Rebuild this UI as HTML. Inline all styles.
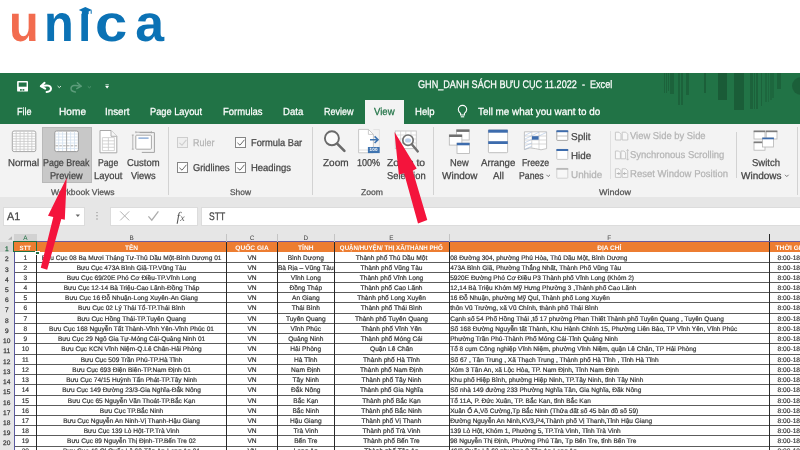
<!DOCTYPE html>
<html lang="vi">
<head>
<meta charset="utf-8">
<title>Unica - Excel Page Break Preview</title>
<style>
html,body{margin:0;padding:0;width:800px;height:450px;overflow:hidden;}
#clip{position:absolute;left:0;top:0;width:800px;height:450px;overflow:hidden;background:#fff;}
body{width:800px;height:450px;overflow:hidden;background:#fff;position:relative;font-family:"Liberation Sans",sans-serif;text-rendering:geometricPrecision;}
#wrap{position:absolute;left:-12px;top:-12px;width:824px;height:474px;filter:blur(0.4px);}
#page{position:absolute;left:12px;top:12px;width:800px;height:450px;}
.abs{position:absolute;}
.t{position:absolute;white-space:nowrap;line-height:1;transform-origin:0 0;font-family:"Liberation Sans",sans-serif;-webkit-text-stroke:0.25px currentColor;}
#logo{position:absolute;left:0;top:0;font-family:"Liberation Sans",sans-serif;font-weight:bold;font-size:51.8px;line-height:1;color:#0b72b5;white-space:nowrap;}
#logo span{position:absolute;top:-2.4px;transform-origin:0 0;}
#logo .u{color:#f26c4f;}
#green{left:-12px;top:73px;width:824px;height:50.6px;background:#217346;}
#viewtab{left:364.5px;top:100px;width:39.5px;height:25px;background:#f3f3f3;}
#ribbon{left:-12px;top:123.6px;width:824px;height:73.4px;background:#f3f3f3;}
#below{left:-12px;top:197px;width:824px;height:265px;background:#e6e6e6;}
.sep{position:absolute;width:1px;background:#d2d2d2;top:127px;height:68px;}
.box{position:absolute;background:#fff;border:1px solid #dcdcdc;box-sizing:border-box;}
.cb{position:absolute;width:10.5px;height:10.5px;box-sizing:border-box;border:1px solid #858585;background:#fdfdfd;}
.cb.dis{border-color:#cdcdcd;background:#efefef;}
svg{position:absolute;overflow:visible;}
/* sheet */
#sheet{left:-12px;top:228px;width:824px;height:234px;background:#e6e6e6;}
.hrow,.row{position:absolute;left:0;width:800px;}
.hrow{background:#ed7d31;left:14px;width:798px;}
.row{background:#fff;left:14px;width:798px;border-bottom:1px solid #5c5c5c;box-sizing:border-box;}
.hc{position:absolute;top:0;height:100%;color:#fff;font-weight:bold;font-size:6.6px;line-height:13.6px;text-align:center;white-space:nowrap;box-sizing:border-box;margin-left:-14px;overflow:hidden;}
.c{position:absolute;top:0;height:100%;color:#383838;font-size:6.62px;line-height:11px;text-align:center;white-space:nowrap;box-sizing:border-box;margin-left:-14px;overflow:hidden;-webkit-text-stroke:0.2px currentColor;}
.rn{position:absolute;left:0;width:13.5px;text-align:center;color:#3a3a3a;font-size:6.6px;line-height:16px;box-sizing:border-box;-webkit-text-stroke:0.25px currentColor;}
.cl{position:absolute;top:233.5px;height:8px;text-align:center;color:#444;font-size:6.4px;line-height:10.8px;}
.cl.sel{background:#d2d2d2;color:#217346;border-bottom:1px solid #217346;box-sizing:border-box;}
.vl{position:absolute;width:1px;background:#2a2a2a;top:241.7px;height:225px;}
</style>
</head>
<body>
<div id="clip"><div id="wrap"><div id="page">
<!-- logo -->
<div id="logo"><span class="u" style="left:9.3px;transform:scaleX(0.94)">u</span><span style="left:44.2px;transform:scaleX(0.94)">n</span><span style="left:77.6px;transform:scaleX(0.93)">i</span><span style="left:95px;transform:scaleX(1.12)">c</span><span style="left:135.2px;transform:scaleX(1.0)">a</span></div>
<div class="abs" style="left:78px;top:0;width:15px;height:13.2px;background:#fff"></div>
<svg style="left:78px;top:5.6px" width="15" height="9" viewBox="0 0 15 9"><polygon points="0.8,4.1 7.3,1 14,4.1 7.3,7.1" fill="#0b72b5"/><path d="M3.9,5.2 L3.9,8.2 L10.7,8.2 L10.7,5.2 Z" fill="#0b72b5"/><path d="M13.2,4.3 L13.2,7.8" stroke="#0b72b5" stroke-width="1" fill="none"/></svg>

<!-- excel chrome -->
<div id="green" class="abs"></div>
<!-- title bar pattern -->
<div class="abs" style="left:663.5px;top:73px;width:1.2px;height:20.4px;background:rgba(0,0,0,0.145)"></div>
<div class="abs" style="left:665.8px;top:73px;width:1.2px;height:20.4px;background:rgba(0,0,0,0.145)"></div>
<div class="abs" style="left:667.6px;top:73px;width:1.2px;height:18.0px;background:rgba(0,0,0,0.145)"></div>
<div class="abs" style="left:670px;top:73px;width:4.4px;height:21.4px;background:rgba(0,0,0,0.145)"></div>
<div class="abs" style="left:678px;top:73px;width:2px;height:31.7px;background:rgba(0,0,0,0.145)"></div>
<div class="abs" style="left:681px;top:73px;width:2.4px;height:31.7px;background:rgba(0,0,0,0.145)"></div>
<div class="abs" style="left:685.6px;top:73px;width:3.4px;height:22.3px;background:rgba(0,0,0,0.145)"></div>
<div class="abs" style="left:704.4px;top:73px;width:1.6px;height:19.5px;background:rgba(0,0,0,0.174)"></div>
<div class="abs" style="left:717.5px;top:73px;width:9.4px;height:27.0px;background:rgba(0,0,0,0.203)"></div>
<div class="abs" style="left:734.4px;top:73px;width:9.4px;height:37.3px;background:rgba(0,0,0,0.189)"></div>
<div class="abs" style="left:750.3px;top:73px;width:2.4px;height:36.4px;background:rgba(0,0,0,0.145)"></div>
<div class="abs" style="left:753.6px;top:73px;width:1.6px;height:36.4px;background:rgba(0,0,0,0.145)"></div>
<div class="abs" style="left:756px;top:73px;width:1.8px;height:36.4px;background:rgba(0,0,0,0.145)"></div>
<div class="abs" style="left:760.6px;top:73px;width:1.9px;height:32.6px;background:rgba(0,0,0,0.145)"></div>
<div class="abs" style="left:765.3px;top:73px;width:1.5px;height:29.0px;background:rgba(0,0,0,0.102)"></div>
<div class="abs" style="left:767.6px;top:73px;width:1.5px;height:29.0px;background:rgba(0,0,0,0.102)"></div>
<div class="abs" style="left:770px;top:73px;width:1.5px;height:27.0px;background:rgba(0,0,0,0.102)"></div>
<div class="abs" style="left:772.3px;top:73px;width:1.5px;height:25.0px;background:rgba(0,0,0,0.102)"></div>
<div class="abs" style="left:776.6px;top:73px;width:4.7px;height:15.8px;background:rgba(0,0,0,0.145)"></div>
<div class="abs" style="left:792px;top:77px;width:18px;height:18px;border-radius:9px;background:rgba(0,0,0,0.174)"></div>
<div id="viewtab" class="abs"></div>
<div id="ribbon" class="abs"></div>
<div id="below" class="abs"></div>


<!-- separators -->
<div class="sep" style="left:168px"></div>
<div class="sep" style="left:312px"></div>
<div class="sep" style="left:433px"></div>
<div class="sep" style="left:736px;top:131.5px;height:46.5px"></div>
<div class="sep" style="left:797px"></div>
<div class="sep" style="left:610px;top:131px;height:48px;background:#e0e0e0"></div>

<!-- formula bar -->
<div class="box" style="left:3px;top:207px;width:82px;height:18.5px"></div>
<div class="box" style="left:110px;top:207px;width:87.5px;height:18.5px"></div>
<div class="box" style="left:200.5px;top:207px;width:610px;height:18.5px"></div>

<!-- selected button -->
<div class="abs" style="left:42px;top:126.8px;width:50.3px;height:56px;background:#c8c8c8;border:1px solid #b9b9b9;box-sizing:border-box"></div>
<div class="cb dis" style="left:177.3px;top:137.3px"></div>
<div class="cb" style="left:235.3px;top:137.3px"></div>
<div class="cb" style="left:177.3px;top:162.3px"></div>
<div class="cb" style="left:235.3px;top:162.3px"></div>
<svg style="left:0;top:0" width="800" height="450" viewBox="0 0 800 450" fill="none">
<!-- quick access -->
<g transform="translate(0,0.6)">
<g>
 <rect x="17.1" y="80.4" width="10.9" height="10.6" rx="0.9" fill="#fff"/>
 <rect x="18.7" y="81.9" width="7.9" height="4.2" fill="#217346"/>
 <rect x="20" y="88.5" width="1.8" height="1.6" fill="#217346"/>
 <rect x="22.5" y="88.5" width="1.8" height="1.6" fill="#217346"/>
</g>
<g stroke="#fff" stroke-width="2" fill="none" stroke-linecap="round" stroke-linejoin="round">
 <path d="M44.6,82.2 L40.8,85.6 L45.2,88"/>
 <path d="M41.2,85.6 Q50.6,83.2 51,88 Q51,91 46.6,91.4"/>
</g>
<path d="M57.6,85.4 L59.3,87 L61,85.4" stroke="#d6e8dd" stroke-width="1"/>
<g stroke="#5c9c7a" stroke-width="1.5" fill="none" stroke-linecap="round" stroke-linejoin="round">
 <path d="M77.4,82.2 L81.2,85.6 L76.8,88"/>
 <path d="M80.8,85.6 Q71.4,83.2 71,88 Q71,91 75.4,91.4"/>
</g>
<path d="M87.8,85.8 L89.4,87.2 L91,85.8" stroke="#5c9c7a" stroke-width="0.8"/>
<path d="M105.4,84.2 H108.8" stroke="#fff" stroke-width="0.8"/>
<path d="M105.2,85.4 H109 L107.1,87.8 Z" fill="#fff"/>
</g>
<!-- bulb -->
<g stroke="#fff" stroke-width="1.1" fill="none">
 <path d="M460.6,115 V113.4 Q458.3,111.6 458.3,109.6 A4.2,4.2 0 0 1 466.7,109.6 Q466.7,111.6 464.4,113.4 V115 Z"/>
 <path d="M460.8,116.8 H464.2"/>
</g>

<!-- Normal icon -->
<g>
 <rect x="12.3" y="131" width="23.5" height="20.6" rx="1.8" fill="#fff" stroke="#a6a6a6" stroke-width="1"/>
 <path d="M16.2,131.5 V151 M20.1,131.5 V151 M24,131.5 V151 M27.9,131.5 V151 M31.8,131.5 V151 M12.8,133.6 H35.3 M12.8,136.2 H35.3 M12.8,138.8 H35.3 M12.8,141.4 H35.3 M12.8,144 H35.3 M12.8,146.6 H35.3 M12.8,149.2 H35.3" stroke="#c6c6c6" stroke-width="0.8"/>
</g>
<!-- Page Break Preview icon -->
<g>
 <rect x="54.8" y="131" width="23.6" height="20.6" rx="1.8" fill="#fff" stroke="#999" stroke-width="1"/>
 <path d="M58.7,131.5 V151 M62.6,131.5 V151 M70.6,131.5 V151 M74.5,131.5 V151 M55.3,134 H77.9 M55.3,137 H77.9 M55.3,140 H77.9 M55.3,143 H77.9 M55.3,148.6 H77.9" stroke="#d3dfee" stroke-width="0.8"/>
 <path d="M66.6,131.5 V151.2" stroke="#a2a2a2" stroke-width="0.9"/>
 <path d="M55.5,145.8 H77.8" stroke="#a2a2a2" stroke-width="0.9" stroke-dasharray="2.6 1.2"/>
</g>
<!-- Page Layout icon -->
<g>
 <path d="M100,130.5 H111 L116.8,136.3 V152.8 H100 Z" fill="#fff" stroke="#a8a8a8" stroke-width="1"/>
 <path d="M111,130.5 V136.3 H116.8" stroke="#a8a8a8" stroke-width="0.9" fill="#f6f6f6"/>
 <path d="M102.4,137.6 H114.4 V150.6 H102.4 Z M102.4,140.8 H114.4 M102.4,144 H114.4 M102.4,147.3 H114.4 M108.4,137.6 V150.6" stroke="#c9c9c9" stroke-width="0.8"/>
</g>
<!-- Custom Views icon -->
<g>
 <path d="M139.6,132.6 H154.4 V152.4 H141.8" stroke="#a3a3a3" stroke-width="1"/>
 <rect x="135.8" y="135.2" width="15.6" height="14" rx="0.8" fill="#fff" stroke="#a8a8a8" stroke-width="1"/>
 <rect x="138.4" y="137.3" width="10.2" height="1.7" fill="#9db8dc"/>
 <path d="M132.8,135 V149.2 M131.8,135 H133.8 M131.8,149.2 H133.8 M135.8,132.2 H151.4 M135.8,131.2 V133.2 M151.4,131.2 V133.2" stroke="#a3a3a3" stroke-width="0.8"/>
</g>
<!-- Zoom icon -->
<g>
 <circle cx="331.9" cy="138.3" r="7" fill="#fbfbfb" stroke="#6a6a6a" stroke-width="1.9"/>
 <path d="M337.4,143.8 L344.4,150.8" stroke="#6a6a6a" stroke-width="2.6" stroke-linecap="round"/>
</g>
<!-- 100% icon -->
<g>
 <path d="M358.6,129.4 H368.4 L373.4,134.4 V152.8 H358.6 Z" fill="#fff" stroke="#c2c2c2" stroke-width="0.9"/>
 <path d="M368.4,129.4 V134.4 H373.4" stroke="#c2c2c2" stroke-width="0.8"/>
 <path d="M373.4,129.6 H379.4 V147" stroke="#dcdcdc" stroke-width="0.8"/>
 <path d="M358.8,150 H368" stroke="#d6d6d6" stroke-width="0.8"/>
 <path d="M370,139.7 H377.6 M374.6,136.4 L378,139.7 L374.6,143" stroke="#3f74b0" stroke-width="1.6"/>
 <rect x="367.9" y="147" width="11.8" height="6.1" fill="#3f74b0"/>
</g>
<!-- Zoom to Selection icon -->
<g>
 <rect x="395.3" y="131" width="21" height="17.6" fill="#fff" stroke="#c4c4c4" stroke-width="0.9"/>
 <path d="M395.3,135 H416.3 M395.3,139 H416.3 M395.3,143 H416.3 M400.6,131 V148.6 M405.8,131 V135 M411,131 V135" stroke="#cfcfcf" stroke-width="0.7"/>
 <circle cx="408" cy="140.2" r="5.2" fill="#fdfdfd" stroke="#707070" stroke-width="1.7"/>
 <ellipse cx="408" cy="140.4" rx="3" ry="2.2" fill="#bcd0ea"/>
 <path d="M412,144.4 L417.8,151.4" stroke="#707070" stroke-width="2.4" stroke-linecap="round"/>
</g>
<!-- New Window icon -->
<g>
 <rect x="456.6" y="129.8" width="12.6" height="10.2" fill="#fff" stroke="#b4b4b4" stroke-width="0.8"/>
 <rect x="456.4" y="129.5" width="13" height="2.4" fill="#6f6f6f"/>
 <rect x="449.3" y="134.9" width="12.6" height="10.2" fill="#fff" stroke="#b4b4b4" stroke-width="0.8"/>
 <rect x="449.1" y="134.6" width="13" height="2.4" fill="#6f6f6f"/>
 <rect x="457" y="143.2" width="12.4" height="10.3" fill="#fff" stroke="#b4b4b4" stroke-width="0.8"/>
 <rect x="456.8" y="142.8" width="12.8" height="2.5" fill="#3d6cad"/>
</g>
<!-- Arrange All icon -->
<g>
 <rect x="488.4" y="129.9" width="19.2" height="22.8" rx="0.8" fill="#fff" stroke="#b9b9b9" stroke-width="0.9"/>
 <rect x="488.2" y="129.7" width="19.6" height="3" fill="#3d6cad"/>
 <rect x="488.2" y="141.2" width="19.6" height="2.8" fill="#3d6cad"/>
</g>
<!-- Freeze Panes icon -->
<g>
 <path d="M524.4,131.8 H546.6 V148.6 Q541,151 535.4,148.6 Q530,146.6 524.4,149.6 Z" fill="#fff" stroke="#b5b5b5" stroke-width="0.8"/>
 <path d="M524.4,136 H546.6 M524.4,140 H546.6 M524.4,144 H546.6 M531.8,131.8 V148 M539,131.8 V149.4" stroke="#c9c9c9" stroke-width="0.7"/>
 <path d="M524.6,135.6 L531.6,132 M524.6,139.2 L539,132.2 M524.6,142.8 L546.4,132.4 M524.6,146.4 L531.8,143 M524.6,149.4 L531.8,146.2" stroke="#a9c0df" stroke-width="0.6"/>
 <rect x="532" y="136.2" width="6.6" height="3.5" fill="#3d6cad"/>
</g>
<!-- Split -->
<g>
 <rect x="556.8" y="130.8" width="11" height="9.6" rx="0.6" fill="#fff" stroke="#9d9d9d" stroke-width="0.9"/>
 <rect x="556.4" y="130.3" width="11.8" height="1.9" fill="#3d6cad"/>
 <path d="M557,136 H567.6" stroke="#b5b5b5" stroke-width="0.8"/>
</g>
<!-- Hide -->
<g>
 <rect x="556.8" y="149.4" width="11" height="10" rx="0.6" fill="#fff" stroke="#c4c4c4" stroke-width="0.9"/>
 <rect x="556.4" y="149" width="11.8" height="2" fill="#3d6cad"/>
</g>
<!-- Unhide -->
<g>
 <rect x="556.8" y="168.4" width="11" height="9.8" rx="0.6" fill="#f7f7f7" stroke="#cdcdcd" stroke-width="0.9"/>
 <rect x="556.4" y="168" width="11.8" height="1.8" fill="#b9b9b9"/>
</g>
<!-- View side by side etc (disabled) -->
<g stroke="#c3c3c3" stroke-width="0.9" fill="#f8f8f8">
 <path d="M615.4,132.2 H619 L621,134.2 V140 H615.4 Z"/>
 <path d="M622.2,132.2 H625.8 L627.8,134.2 V140 H622.2 Z"/>
 <path d="M615.4,151 H618.6 L620.4,152.8 V158.8 H615.4 Z"/>
 <path d="M621,151 H624 L625.6,152.8 V158.8 H621 Z"/>
 <path d="M627.6,149.6 V160 M626.6,150.8 L627.6,149.4 L628.6,150.8 M626.6,158.8 L627.6,160.2 L628.6,158.8" fill="none"/>
 <path d="M615.4,168.8 H619 L621,170.8 V177.4 H615.4 Z"/>
 <path d="M622.2,168.8 H625.8 L627.8,170.8 V177.4 H622.2 Z"/>
</g>
<path d="M616.6,173.6 H619.6 M618.6,172.4 L619.8,173.6 L618.6,174.8 M626.6,173.6 H623.6 M624.6,172.4 L623.4,173.6 L624.6,174.8" stroke="#9c9c9c" stroke-width="0.8"/>
<!-- Switch Windows icon -->
<g>
 <rect x="754" y="131" width="11" height="8" fill="#fff" stroke="#b4b4b4" stroke-width="0.8"/>
 <rect x="753.7" y="130.6" width="11.6" height="1.6" fill="#7c7c7c"/>
 <rect x="766.2" y="131" width="10.8" height="8" fill="#fff" stroke="#b4b4b4" stroke-width="0.8"/>
 <rect x="765.9" y="130.6" width="11.4" height="1.6" fill="#7c7c7c"/>
 <rect x="754" y="142" width="11" height="8.2" fill="#fff" stroke="#b4b4b4" stroke-width="0.8"/>
 <rect x="753.7" y="141.6" width="11.6" height="1.6" fill="#7c7c7c"/>
 <rect x="762.6" y="138" width="11" height="9" fill="#fff" stroke="#b4b4b4" stroke-width="0.8"/>
 <rect x="762.3" y="137.6" width="11.6" height="1.7" fill="#3d6cad"/>
</g>
<!-- chevrons -->
<path d="M546.4,174.8 L548.2,176.6 L550,174.8" stroke="#666" stroke-width="0.9"/>
<path d="M785,174.8 L786.8,176.6 L788.6,174.8" stroke="#666" stroke-width="0.9"/>
<!-- checkboxes checks -->
<g stroke="#cfcfcf" stroke-width="1.1"><path d="M179.4,142.8 L182,145.2 L186.4,139.8"/></g>
<g stroke="#6a6a6a" stroke-width="1"><path d="M237.4,142.8 L240,145.2 L244.4,139.8"/><path d="M179.4,167.8 L182,170.2 L186.4,164.8"/><path d="M237.4,167.8 L240,170.2 L244.4,164.8"/></g>
<!-- formula bar glyphs -->
<path d="M75.6,214.6 H80 L77.8,217 Z" fill="#666"/>
<g fill="#8e8e8e"><circle cx="97" cy="212.6" r="0.7"/><circle cx="97" cy="215.8" r="0.7"/><circle cx="97" cy="219" r="0.7"/></g>
<path d="M120.2,211.4 L129.2,220.4 M129.2,211.4 L120.2,220.4" stroke="#b3b3b3" stroke-width="1"/>
<path d="M148.4,216.4 L151.8,220.2 L158.4,211.4" stroke="#adadad" stroke-width="1.3"/>
</svg>
<span class="abs" style="left:176.5px;top:209.5px;font-family:'Liberation Serif',serif;font-style:italic;font-size:13px;line-height:1;color:#555">f<span style="font-size:10px">x</span></span>
<span class="abs" style="left:369.6px;top:147.6px;font-size:4.6px;line-height:1;color:#fff;font-weight:bold;letter-spacing:0.1px">100</span>

<span class="t" id="L0" style="left:418.1px;top:80.3px;font-size:11px;color:#ffffff;transform:scaleX(0.8275);white-space:pre">GHN_DANH SÁCH BƯU CỤC 11.2022  -  Excel</span>
<span class="t" id="L1" style="left:16.5px;top:107.7px;font-size:10.3px;color:#ffffff;transform:scaleX(0.8809);">File</span>
<span class="t" id="L2" style="left:58.5px;top:107.7px;font-size:10.3px;color:#ffffff;transform:scaleX(0.9836);">Home</span>
<span class="t" id="L3" style="left:105.3px;top:107.7px;font-size:10.3px;color:#ffffff;transform:scaleX(0.9555);">Insert</span>
<span class="t" id="L4" style="left:150.3px;top:107.7px;font-size:10.3px;color:#ffffff;transform:scaleX(0.8995);">Page Layout</span>
<span class="t" id="L5" style="left:222.7px;top:107.7px;font-size:10.3px;color:#ffffff;transform:scaleX(0.9230);">Formulas</span>
<span class="t" id="L6" style="left:283.1px;top:107.7px;font-size:10.3px;color:#ffffff;transform:scaleX(0.9289);">Data</span>
<span class="t" id="L7" style="left:323.7px;top:107.7px;font-size:10.3px;color:#ffffff;transform:scaleX(0.8772);">Review</span>
<span class="t" id="L8" style="left:373.7px;top:107.7px;font-size:10.3px;color:#217346;transform:scaleX(0.9312);">View</span>
<span class="t" id="L9" style="left:414.7px;top:107.7px;font-size:10.3px;color:#ffffff;transform:scaleX(0.9259);">Help</span>
<span class="t" id="L10" style="left:478.1px;top:107.7px;font-size:10.3px;color:#ffffff;transform:scaleX(0.9619);">Tell me what you want to do</span>
<span class="t" id="L11" style="left:8.2px;top:159.0px;font-size:10px;color:#444444;transform:scaleX(0.9648);">Normal</span>
<span class="t" id="L12" style="left:43.3px;top:159.0px;font-size:10px;color:#444444;transform:scaleX(0.8897);">Page Break</span>
<span class="t" id="L13" style="left:50.4px;top:171.6px;font-size:10px;color:#444444;transform:scaleX(0.9163);">Preview</span>
<span class="t" id="L14" style="left:98.4px;top:159.0px;font-size:10px;color:#444444;transform:scaleX(0.8647);">Page</span>
<span class="t" id="L15" style="left:94.3px;top:171.6px;font-size:10px;color:#444444;transform:scaleX(0.9424);">Layout</span>
<span class="t" id="L16" style="left:126.9px;top:159.0px;font-size:10px;color:#444444;transform:scaleX(0.9462);">Custom</span>
<span class="t" id="L17" style="left:131.3px;top:171.6px;font-size:10px;color:#444444;transform:scaleX(0.9283);">Views</span>
<span class="t" id="L18" style="left:51.4px;top:187.7px;font-size:8.3px;color:#555;transform:scaleX(1.0341);">Workbook Views</span>
<span class="t" id="L19" style="left:192.7px;top:139.0px;font-size:10px;color:#b4b4b4;transform:scaleX(0.8952);">Ruler</span>
<span class="t" id="L20" style="left:250.6px;top:139.0px;font-size:10px;color:#444444;transform:scaleX(0.9306);">Formula Bar</span>
<span class="t" id="L21" style="left:192.5px;top:164.3px;font-size:10px;color:#444444;transform:scaleX(0.9273);">Gridlines</span>
<span class="t" id="L22" style="left:250.6px;top:164.3px;font-size:10px;color:#444444;transform:scaleX(0.9464);">Headings</span>
<span class="t" id="L23" style="left:229.5px;top:188.0px;font-size:8.3px;color:#555;transform:scaleX(1.0160);">Show</span>
<span class="t" id="L24" style="left:322.5px;top:159.0px;font-size:10px;color:#444444;transform:scaleX(1.0015);">Zoom</span>
<span class="t" id="L25" style="left:357.2px;top:159.0px;font-size:10px;color:#444444;transform:scaleX(0.9031);">100%</span>
<span class="t" id="L26" style="left:387.2px;top:159.0px;font-size:10px;color:#444444;transform:scaleX(1.0385);">Zoom to</span>
<span class="t" id="L27" style="left:386.7px;top:171.6px;font-size:10px;color:#444444;transform:scaleX(0.9382);">Selection</span>
<span class="t" id="L28" style="left:361.1px;top:188.0px;font-size:8.3px;color:#555;transform:scaleX(1.0367);">Zoom</span>
<span class="t" id="L29" style="left:450.4px;top:159.0px;font-size:10px;color:#444444;transform:scaleX(0.9293);">New</span>
<span class="t" id="L30" style="left:442.1px;top:171.6px;font-size:10px;color:#444444;transform:scaleX(0.9978);">Window</span>
<span class="t" id="L31" style="left:481.0px;top:159.0px;font-size:10px;color:#444444;transform:scaleX(0.9641);">Arrange</span>
<span class="t" id="L32" style="left:493.2px;top:171.6px;font-size:10px;color:#444444;transform:scaleX(0.9798);">All</span>
<span class="t" id="L33" style="left:522.0px;top:159.0px;font-size:10px;color:#444444;transform:scaleX(0.8707);">Freeze</span>
<span class="t" id="L34" style="left:518.6px;top:171.6px;font-size:10px;color:#444444;transform:scaleX(0.8710);">Panes</span>
<span class="t" id="L35" style="left:571.0px;top:133.0px;font-size:10px;color:#444444;transform:scaleX(1.0024);">Split</span>
<span class="t" id="L36" style="left:571.0px;top:152.0px;font-size:10px;color:#444444;transform:scaleX(0.9816);">Hide</span>
<span class="t" id="L37" style="left:571.0px;top:170.8px;font-size:10px;color:#b4b4b4;transform:scaleX(0.9873);">Unhide</span>
<span class="t" id="L38" style="left:629.7px;top:132.2px;font-size:10px;color:#b4b4b4;transform:scaleX(0.9400);">View Side by Side</span>
<span class="t" id="L39" style="left:629.7px;top:151.1px;font-size:10px;color:#b4b4b4;transform:scaleX(0.9477);">Synchronous Scrolling</span>
<span class="t" id="L40" style="left:629.7px;top:170.3px;font-size:10px;color:#b4b4b4;transform:scaleX(0.9540);">Reset Window Position</span>
<span class="t" id="L41" style="left:751.7px;top:159.0px;font-size:10px;color:#444444;transform:scaleX(0.9541);">Switch</span>
<span class="t" id="L42" style="left:740.7px;top:171.6px;font-size:10px;color:#444444;transform:scaleX(1.0005);">Windows</span>
<span class="t" id="L43" style="left:598.8px;top:187.6px;font-size:8.3px;color:#555;transform:scaleX(1.0841);">Window</span>
<span class="t" id="L44" style="left:6.7px;top:211.7px;font-size:11px;color:#444444;transform:scaleX(0.9771);">A1</span>
<span class="t" id="L45" style="left:209.2px;top:211.7px;font-size:11px;color:#444444;transform:scaleX(0.7776);">STT</span>

<!-- sheet -->
<div id="sheet" class="abs"></div>
<div class="hrow" style="top:242px;height:10px">
<div class="hc" style="left:14.0px;width:22.7px;text-align:center"><span style="font-size:6.1px">STT</span></div>
<div class="hc" style="left:36.7px;width:189.7px;text-align:center">TÊN</div>
<div class="hc" style="left:226.4px;width:51.2px;text-align:center">QUỐC GIA</div>
<div class="hc" style="left:277.6px;width:56.4px;text-align:center">TỈNH</div>
<div class="hc" style="left:334.0px;width:115.0px;text-align:center"><span style="display:inline-block;transform:scaleX(0.93)">QUẬN/HUYỆN/ THỊ XÃ/THÀNH PHỐ</span></div>
<div class="hc" style="left:449.0px;width:320.6px;text-align:center">ĐỊA CHỈ</div>
<div class="hc" style="left:769.6px;width:60.4px;text-align:left;padding-left:6px">THỜI GIAN</div>
</div>
<div class="row" style="top:252px;height:11px">
<div class="c" style="left:14.0px;width:22.7px;top:1px;">1</div>
<div class="c" style="left:36.7px;width:189.7px;font-size:6.56px;top:1px;">Bưu Cục 08 Ba Mươi Tháng Tư-Thủ Dầu Một-Bình Dương 01</div>
<div class="c" style="left:226.4px;width:51.2px;top:1px;">VN</div>
<div class="c" style="left:277.6px;width:56.4px;top:1px;">Bình Dương</div>
<div class="c" style="left:334.0px;width:115.0px;top:1px;">Thành phố Thủ Dầu Một</div>
<div class="c" style="left:449.0px;width:320.6px;text-align:left;padding-left:1.2px;font-size:6.54px;top:1px;">08 Đường 304, phường Phú Hòa, Thủ Dầu Một, Bình Dương</div>
<div class="c" style="left:769.6px;width:60.4px;text-align:left;padding-left:8px;top:1px;">8:00-18:00</div>
</div>
<div class="row" style="top:263px;height:10px">
<div class="c" style="left:14.0px;width:22.7px;">2</div>
<div class="c" style="left:36.7px;width:189.7px;font-size:6.56px;">Bưu Cục 473A Bình Giã-TP.Vũng Tàu</div>
<div class="c" style="left:226.4px;width:51.2px;">VN</div>
<div class="c" style="left:277.6px;width:56.4px;">Bà Rịa – Vũng Tàu</div>
<div class="c" style="left:334.0px;width:115.0px;">Thành phố Vũng Tàu</div>
<div class="c" style="left:449.0px;width:320.6px;text-align:left;padding-left:1.2px;font-size:6.54px;">473A Bình Giã, Phường Thắng Nhất, Thành Phố Vũng Tàu</div>
<div class="c" style="left:769.6px;width:60.4px;text-align:left;padding-left:8px;">8:00-18:00</div>
</div>
<div class="row" style="top:273px;height:10px">
<div class="c" style="left:14.0px;width:22.7px;">3</div>
<div class="c" style="left:36.7px;width:189.7px;font-size:6.56px;">Bưu Cục 69/20E Phó Cơ Điều-TP.Vĩnh Long</div>
<div class="c" style="left:226.4px;width:51.2px;">VN</div>
<div class="c" style="left:277.6px;width:56.4px;">Vĩnh Long</div>
<div class="c" style="left:334.0px;width:115.0px;">Thành phố Vĩnh Long</div>
<div class="c" style="left:449.0px;width:320.6px;text-align:left;padding-left:1.2px;font-size:6.54px;">5920E Đường Phó Cơ Điều P3 Thành phố Vĩnh Long (Khóm 2)</div>
<div class="c" style="left:769.6px;width:60.4px;text-align:left;padding-left:8px;">8:00-18:00</div>
</div>
<div class="row" style="top:283px;height:10px">
<div class="c" style="left:14.0px;width:22.7px;">4</div>
<div class="c" style="left:36.7px;width:189.7px;font-size:6.56px;">Bưu Cục 12-14 Bà Triệu-Cao Lãnh-Đồng Tháp</div>
<div class="c" style="left:226.4px;width:51.2px;">VN</div>
<div class="c" style="left:277.6px;width:56.4px;">Đồng Tháp</div>
<div class="c" style="left:334.0px;width:115.0px;">Thành phố Cao Lãnh</div>
<div class="c" style="left:449.0px;width:320.6px;text-align:left;padding-left:1.2px;font-size:6.54px;">12,14 Bà Triệu Khóm Mỹ Hưng Phường 3 ,Thành phố Cao Lãnh</div>
<div class="c" style="left:769.6px;width:60.4px;text-align:left;padding-left:8px;">8:00-18:00</div>
</div>
<div class="row" style="top:293px;height:10px">
<div class="c" style="left:14.0px;width:22.7px;">5</div>
<div class="c" style="left:36.7px;width:189.7px;font-size:6.56px;">Bưu Cục 16 Đỗ Nhuận-Long Xuyên-An Giang</div>
<div class="c" style="left:226.4px;width:51.2px;">VN</div>
<div class="c" style="left:277.6px;width:56.4px;">An Giang</div>
<div class="c" style="left:334.0px;width:115.0px;">Thành phố Long Xuyên</div>
<div class="c" style="left:449.0px;width:320.6px;text-align:left;padding-left:1.2px;font-size:6.54px;">16 Đỗ Nhuận, phường Mỹ Quí, Thành phố Long Xuyên</div>
<div class="c" style="left:769.6px;width:60.4px;text-align:left;padding-left:8px;">8:00-18:00</div>
</div>
<div class="row" style="top:303px;height:11px">
<div class="c" style="left:14.0px;width:22.7px;">6</div>
<div class="c" style="left:36.7px;width:189.7px;font-size:6.56px;">Bưu Cục 02 Lý Thái Tổ-TP.Thái Bình</div>
<div class="c" style="left:226.4px;width:51.2px;">VN</div>
<div class="c" style="left:277.6px;width:56.4px;">Thái Bình</div>
<div class="c" style="left:334.0px;width:115.0px;">Thành phố Thái Bình</div>
<div class="c" style="left:449.0px;width:320.6px;text-align:left;padding-left:1.2px;font-size:6.54px;">thôn Vũ Trường, xã Vũ Chính, thành phố Thái Bình</div>
<div class="c" style="left:769.6px;width:60.4px;text-align:left;padding-left:8px;">8:00-18:00</div>
</div>
<div class="row" style="top:314px;height:10px">
<div class="c" style="left:14.0px;width:22.7px;">7</div>
<div class="c" style="left:36.7px;width:189.7px;font-size:6.56px;">Bưu Cục Hồng Thái-TP.Tuyên Quang</div>
<div class="c" style="left:226.4px;width:51.2px;">VN</div>
<div class="c" style="left:277.6px;width:56.4px;">Tuyên Quang</div>
<div class="c" style="left:334.0px;width:115.0px;">Thành phố Tuyên Quang</div>
<div class="c" style="left:449.0px;width:320.6px;text-align:left;padding-left:1.2px;font-size:6.54px;">Cạnh số 54 Phố Hồng Thái ,tổ 17 phường Phan Thiết Thành phố Tuyên Quang , Tuyên Quang</div>
<div class="c" style="left:769.6px;width:60.4px;text-align:left;padding-left:8px;">8:00-18:00</div>
</div>
<div class="row" style="top:324px;height:10px">
<div class="c" style="left:14.0px;width:22.7px;">8</div>
<div class="c" style="left:36.7px;width:189.7px;font-size:6.56px;">Bưu Cục 168 Nguyễn Tất Thành-Vĩnh Yên-Vĩnh Phúc 01</div>
<div class="c" style="left:226.4px;width:51.2px;">VN</div>
<div class="c" style="left:277.6px;width:56.4px;">Vĩnh Phúc</div>
<div class="c" style="left:334.0px;width:115.0px;">Thành phố Vĩnh Yên</div>
<div class="c" style="left:449.0px;width:320.6px;text-align:left;padding-left:1.2px;font-size:6.54px;">Số 168 Đường Nguyễn tất Thành, Khu Hành Chính 15, Phường Liên Bảo, TP Vĩnh Yên, Vĩnh Phúc</div>
<div class="c" style="left:769.6px;width:60.4px;text-align:left;padding-left:8px;">8:00-18:00</div>
</div>
<div class="row" style="top:334px;height:10px">
<div class="c" style="left:14.0px;width:22.7px;">9</div>
<div class="c" style="left:36.7px;width:189.7px;font-size:6.56px;">Bưu Cục 29 Ngô Gia Tự-Móng Cái-Quảng Ninh 01</div>
<div class="c" style="left:226.4px;width:51.2px;">VN</div>
<div class="c" style="left:277.6px;width:56.4px;">Quảng Ninh</div>
<div class="c" style="left:334.0px;width:115.0px;">Thành phố Móng Cái</div>
<div class="c" style="left:449.0px;width:320.6px;text-align:left;padding-left:1.2px;font-size:6.54px;">Phường Trần Phú-Thành Phố Móng Cái-Tỉnh Quảng Ninh</div>
<div class="c" style="left:769.6px;width:60.4px;text-align:left;padding-left:8px;">8:00-18:00</div>
</div>
<div class="row" style="top:344px;height:11px">
<div class="c" style="left:14.0px;width:22.7px;">10</div>
<div class="c" style="left:36.7px;width:189.7px;font-size:6.56px;">Bưu Cục KCN Vĩnh Niệm-Q.Lê Chân-Hải Phòng</div>
<div class="c" style="left:226.4px;width:51.2px;">VN</div>
<div class="c" style="left:277.6px;width:56.4px;">Hải Phòng</div>
<div class="c" style="left:334.0px;width:115.0px;">Quận Lê Chân</div>
<div class="c" style="left:449.0px;width:320.6px;text-align:left;padding-left:1.2px;font-size:6.54px;">Tổ 8 cụm Công nghiệp Vĩnh Niệm, phường Vĩnh Niệm, quận Lê Chân, TP Hải Phòng</div>
<div class="c" style="left:769.6px;width:60.4px;text-align:left;padding-left:8px;">8:00-18:00</div>
</div>
<div class="row" style="top:355px;height:10px">
<div class="c" style="left:14.0px;width:22.7px;">11</div>
<div class="c" style="left:36.7px;width:189.7px;font-size:6.56px;">Bưu Cục 509 Trần Phú-TP.Hà Tĩnh</div>
<div class="c" style="left:226.4px;width:51.2px;">VN</div>
<div class="c" style="left:277.6px;width:56.4px;">Hà Tĩnh</div>
<div class="c" style="left:334.0px;width:115.0px;">Thành phố Hà Tĩnh</div>
<div class="c" style="left:449.0px;width:320.6px;text-align:left;padding-left:1.2px;font-size:6.54px;">Số 67 , Tân Trung , Xã Thạch Trung , Thành phố Hà Tĩnh , Tỉnh Hà Tĩnh</div>
<div class="c" style="left:769.6px;width:60.4px;text-align:left;padding-left:8px;">8:00-18:00</div>
</div>
<div class="row" style="top:365px;height:10px">
<div class="c" style="left:14.0px;width:22.7px;">12</div>
<div class="c" style="left:36.7px;width:189.7px;font-size:6.56px;">Bưu Cục 693 Điện Biên-TP.Nam Định 01</div>
<div class="c" style="left:226.4px;width:51.2px;">VN</div>
<div class="c" style="left:277.6px;width:56.4px;">Nam Định</div>
<div class="c" style="left:334.0px;width:115.0px;">Thành phố Nam Định</div>
<div class="c" style="left:449.0px;width:320.6px;text-align:left;padding-left:1.2px;font-size:6.54px;">Xóm 3 Tân An, xã Lộc Hòa, TP. Nam Định, Tỉnh Nam Định</div>
<div class="c" style="left:769.6px;width:60.4px;text-align:left;padding-left:8px;">8:00-18:00</div>
</div>
<div class="row" style="top:375px;height:10px">
<div class="c" style="left:14.0px;width:22.7px;">13</div>
<div class="c" style="left:36.7px;width:189.7px;font-size:6.56px;">Bưu Cục 74/15 Huỳnh Tấn Phát-TP.Tây Ninh</div>
<div class="c" style="left:226.4px;width:51.2px;">VN</div>
<div class="c" style="left:277.6px;width:56.4px;">Tây Ninh</div>
<div class="c" style="left:334.0px;width:115.0px;">Thành phố Tây Ninh</div>
<div class="c" style="left:449.0px;width:320.6px;text-align:left;padding-left:1.2px;font-size:6.54px;">Khu phố Hiệp Bình, phường Hiệp Ninh, TP.Tây Ninh, tỉnh Tây Ninh</div>
<div class="c" style="left:769.6px;width:60.4px;text-align:left;padding-left:8px;">8:00-18:00</div>
</div>
<div class="row" style="top:385px;height:11px">
<div class="c" style="left:14.0px;width:22.7px;">14</div>
<div class="c" style="left:36.7px;width:189.7px;font-size:6.56px;">Bưu Cục 149 Đường 23/3-Gia Nghĩa-Đắk Nông</div>
<div class="c" style="left:226.4px;width:51.2px;">VN</div>
<div class="c" style="left:277.6px;width:56.4px;">Đắk Nông</div>
<div class="c" style="left:334.0px;width:115.0px;">Thành phố Gia Nghĩa</div>
<div class="c" style="left:449.0px;width:320.6px;text-align:left;padding-left:1.2px;font-size:6.54px;">Số nhà 149 đường 233 Phường Nghĩa Tân, Gia Nghĩa, Đăk Nông</div>
<div class="c" style="left:769.6px;width:60.4px;text-align:left;padding-left:8px;">8:00-18:00</div>
</div>
<div class="row" style="top:396px;height:10px">
<div class="c" style="left:14.0px;width:22.7px;">15</div>
<div class="c" style="left:36.7px;width:189.7px;font-size:6.56px;">Bưu Cục 65 Nguyễn Văn Thoát-TP.Bắc Kạn</div>
<div class="c" style="left:226.4px;width:51.2px;">VN</div>
<div class="c" style="left:277.6px;width:56.4px;">Bắc Kạn</div>
<div class="c" style="left:334.0px;width:115.0px;">Thành phố Bắc Kạn</div>
<div class="c" style="left:449.0px;width:320.6px;text-align:left;padding-left:1.2px;font-size:6.54px;">Tổ 11A, P. Đức Xuân, TP. Bắc Kan, tỉnh Bắc Kan</div>
<div class="c" style="left:769.6px;width:60.4px;text-align:left;padding-left:8px;">8:00-18:00</div>
</div>
<div class="row" style="top:406px;height:10px">
<div class="c" style="left:14.0px;width:22.7px;">16</div>
<div class="c" style="left:36.7px;width:189.7px;font-size:6.56px;">Bưu Cục TP.Bắc Ninh</div>
<div class="c" style="left:226.4px;width:51.2px;">VN</div>
<div class="c" style="left:277.6px;width:56.4px;">Bắc Ninh</div>
<div class="c" style="left:334.0px;width:115.0px;">Thành phố Bắc Ninh</div>
<div class="c" style="left:449.0px;width:320.6px;text-align:left;padding-left:1.2px;font-size:6.54px;">Xuân Ổ A,Võ Cường,Tp Bắc Ninh (Thửa đất số 45 bản đồ số 59)</div>
<div class="c" style="left:769.6px;width:60.4px;text-align:left;padding-left:8px;">8:00-18:00</div>
</div>
<div class="row" style="top:416px;height:10px">
<div class="c" style="left:14.0px;width:22.7px;">17</div>
<div class="c" style="left:36.7px;width:189.7px;font-size:6.56px;">Bưu Cục Nguyễn An Ninh-Vị Thanh-Hậu Giang</div>
<div class="c" style="left:226.4px;width:51.2px;">VN</div>
<div class="c" style="left:277.6px;width:56.4px;">Hậu Giang</div>
<div class="c" style="left:334.0px;width:115.0px;">Thành phố Vị Thanh</div>
<div class="c" style="left:449.0px;width:320.6px;text-align:left;padding-left:1.2px;font-size:6.54px;">Đường Nguyễn An Ninh,KV3,P4,Thành phố Vị Thanh,Tỉnh Hậu Giang</div>
<div class="c" style="left:769.6px;width:60.4px;text-align:left;padding-left:8px;">8:00-18:00</div>
</div>
<div class="row" style="top:426px;height:10px">
<div class="c" style="left:14.0px;width:22.7px;">18</div>
<div class="c" style="left:36.7px;width:189.7px;font-size:6.56px;">Bưu Cục 139 Lò Hột-TP.Trà Vinh</div>
<div class="c" style="left:226.4px;width:51.2px;">VN</div>
<div class="c" style="left:277.6px;width:56.4px;">Trà Vinh</div>
<div class="c" style="left:334.0px;width:115.0px;">Thành phố Trà Vinh</div>
<div class="c" style="left:449.0px;width:320.6px;text-align:left;padding-left:1.2px;font-size:6.54px;">139 Lò Hột, Khóm 1, Phường 5, TP.Trà Vinh, Tỉnh Trà Vinh</div>
<div class="c" style="left:769.6px;width:60.4px;text-align:left;padding-left:8px;">8:00-18:00</div>
</div>
<div class="row" style="top:436px;height:11px">
<div class="c" style="left:14.0px;width:22.7px;">19</div>
<div class="c" style="left:36.7px;width:189.7px;font-size:6.56px;">Bưu Cục 89 Nguyễn Thị Định-TP.Bến Tre 02</div>
<div class="c" style="left:226.4px;width:51.2px;">VN</div>
<div class="c" style="left:277.6px;width:56.4px;">Bến Tre</div>
<div class="c" style="left:334.0px;width:115.0px;">Thành phố Bến Tre</div>
<div class="c" style="left:449.0px;width:320.6px;text-align:left;padding-left:1.2px;font-size:6.54px;">98 Nguyễn Thị Định, Phường Phú Tân, Tp Bến Tre, tỉnh Bến Tre</div>
<div class="c" style="left:769.6px;width:60.4px;text-align:left;padding-left:8px;">8:00-18:00</div>
</div>
<div class="row" style="top:447px;height:10px">
<div class="c" style="left:14.0px;width:22.7px;top:-1px;">20</div>
<div class="c" style="left:36.7px;width:189.7px;font-size:6.56px;top:-1px;">Bưu Cục 46 Ql Quốc Lộ 62-Tân An-Long An 01</div>
<div class="c" style="left:226.4px;width:51.2px;top:-1px;">VN</div>
<div class="c" style="left:277.6px;width:56.4px;top:-1px;">Long An</div>
<div class="c" style="left:334.0px;width:115.0px;top:-1px;">Thành phố Tân An</div>
<div class="c" style="left:449.0px;width:320.6px;text-align:left;padding-left:1.2px;font-size:6.54px;top:-1px;">46/2 Quốc Lộ 62 phường 2 Tân An Long An</div>
<div class="c" style="left:769.6px;width:60.4px;text-align:left;padding-left:8px;top:-1px;">8:00-18:00</div>
</div>
<div class="rn" style="top:242px;height:10px;background:#d6d6d6;color:#1f6b40">1</div>
<div class="rn" style="top:252px;height:11px">2</div>
<div class="rn" style="top:263px;height:10px">3</div>
<div class="rn" style="top:273px;height:10px">4</div>
<div class="rn" style="top:283px;height:10px">5</div>
<div class="rn" style="top:293px;height:10px">6</div>
<div class="rn" style="top:303px;height:11px">7</div>
<div class="rn" style="top:314px;height:10px">8</div>
<div class="rn" style="top:324px;height:10px">9</div>
<div class="rn" style="top:334px;height:10px">10</div>
<div class="rn" style="top:344px;height:11px">11</div>
<div class="rn" style="top:355px;height:10px">12</div>
<div class="rn" style="top:365px;height:10px">13</div>
<div class="rn" style="top:375px;height:10px">14</div>
<div class="rn" style="top:385px;height:11px">15</div>
<div class="rn" style="top:396px;height:10px">16</div>
<div class="rn" style="top:406px;height:10px">17</div>
<div class="rn" style="top:416px;height:10px">18</div>
<div class="rn" style="top:426px;height:10px">19</div>
<div class="rn" style="top:436px;height:11px">20</div>
<div class="rn" style="top:447px;height:10px">21</div>
<div class="cl sel" style="left:14.0px;width:22.7px">A</div>
<div class="cl" style="left:36.7px;width:189.7px">B</div>
<div class="cl" style="left:226.4px;width:51.2px">C</div>
<div class="cl" style="left:277.6px;width:56.4px">D</div>
<div class="cl" style="left:334.0px;width:115.0px">E</div>
<div class="cl" style="left:449.0px;width:320.6px">F</div>
<div class="cl" style="left:769.6px;width:100.0px">G</div>
<!-- grid overlays -->
<div class="abs" style="left:13.6px;top:251.5px;width:1.1px;height:200px;background:#5a5aa0"></div>
<div class="vl" style="left:36.3px;top:251.5px"></div>
<div class="vl" style="left:226px"></div>
<div class="vl" style="left:277.2px"></div>
<div class="vl" style="left:333.6px"></div>
<div class="vl" style="left:448.6px"></div>
<div class="vl" style="left:769.2px;top:233.5px"></div>
<div class="abs" style="left:37px;top:241.2px;width:775px;height:1.2px;background:#6b5a9c"></div>
<!-- column header separators -->
<div class="abs" style="left:226px;top:234px;width:1px;height:8px;background:#c4c4c4"></div>
<div class="abs" style="left:277.2px;top:234px;width:1px;height:8px;background:#c4c4c4"></div>
<div class="abs" style="left:333.6px;top:234px;width:1px;height:8px;background:#c4c4c4"></div>
<div class="abs" style="left:448.6px;top:234px;width:1px;height:8px;background:#c4c4c4"></div>
<!-- select-all corner -->
<svg style="left:0;top:0" width="40" height="260" viewBox="0 0 40 260"><polygon points="12,236.2 12,239.8 8,239.8" fill="#b2b2b2"/></svg>
<!-- selected cell A1 -->
<div class="abs" style="left:13.3px;top:240.9px;width:23.8px;height:11.4px;border:1.4px solid #1f7044;box-sizing:border-box"></div>
<div class="abs" style="left:35.4px;top:250.8px;width:2.6px;height:2.6px;background:#1f7044;border:0.4px solid #fff"></div>


<!-- arrows -->
<svg style="left:0;top:0" width="800" height="450" viewBox="0 0 800 450">
<polygon points="66.7,177.8 64.8,219.7 61.3,219 47.2,269.8 40.8,267.7 53.3,217 48,215.7" fill="#f4143c"/>
<polygon points="394.5,132 416.7,168.5 412.7,170.7 427.3,220 418,223.5 404.1,173.3 398.8,174.7" fill="#f4143c"/>
</svg>
</div></div></div>
</body>
</html>
